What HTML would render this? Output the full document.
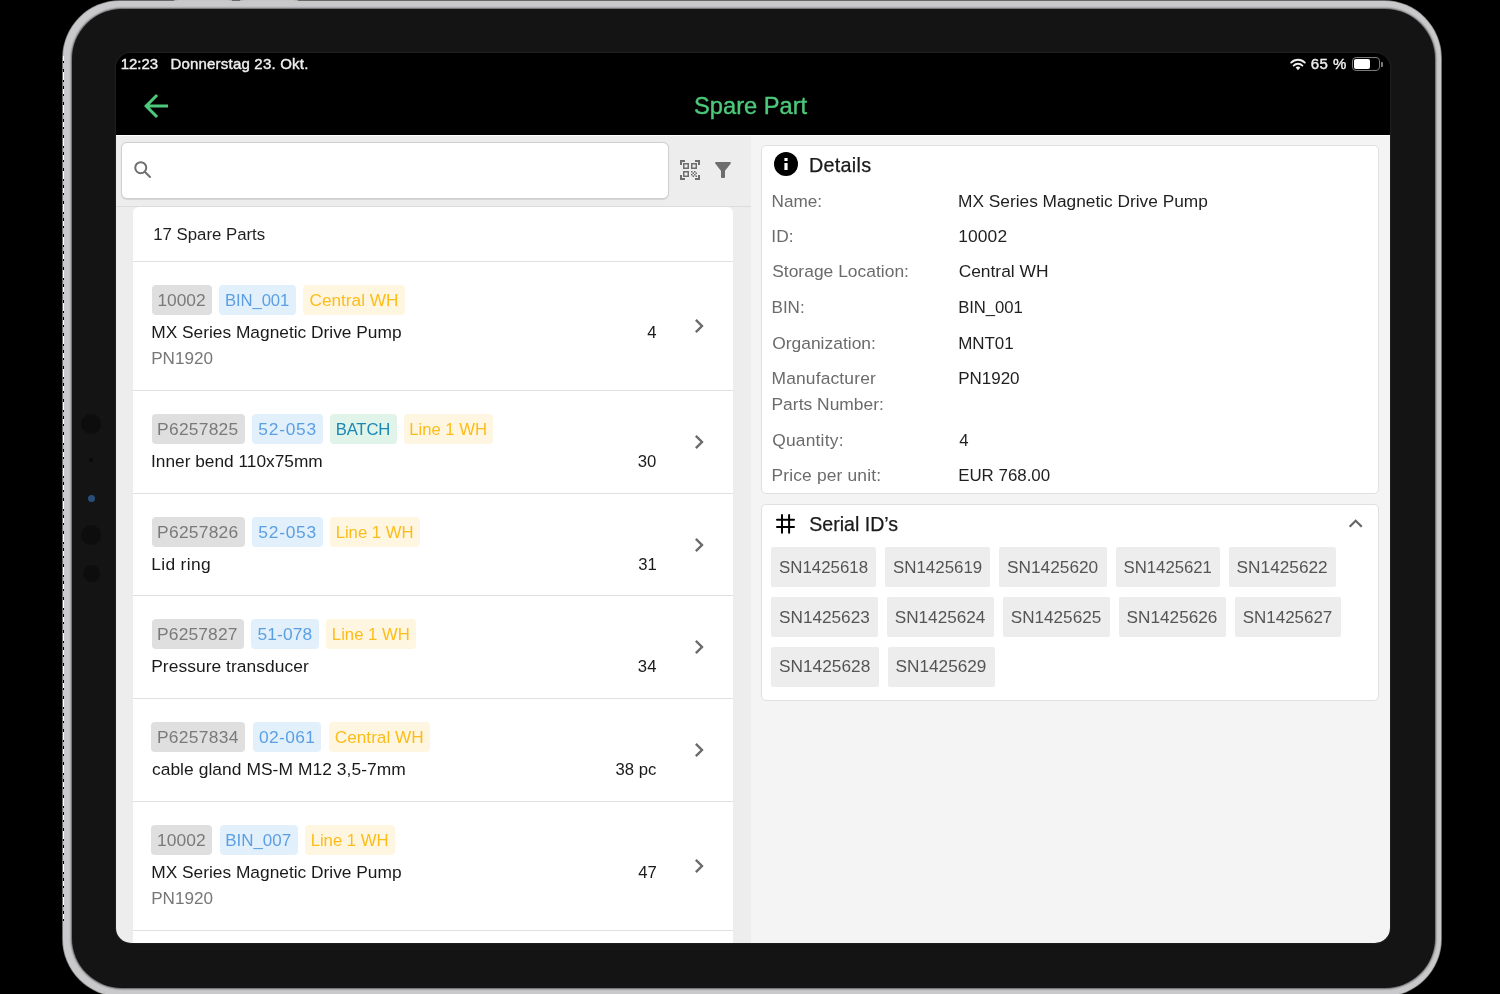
<!DOCTYPE html>
<html><head><meta charset="utf-8">
<style>
*{box-sizing:border-box;margin:0;padding:0}
html,body{width:1500px;height:994px;overflow:hidden;background:#000}
body{position:relative;font-family:"Liberation Sans",sans-serif}
.abs{position:absolute}
svg.abs{overflow:visible}
#dev{position:absolute;left:63px;top:1px;width:1378px;height:995px;border-radius:57px;background:#c9c9cc;box-shadow:0 0 0 0.8px rgba(255,255,250,.55)}
#bezel{position:absolute;left:72px;top:9px;width:1362.5px;height:979px;border-radius:50px;background:#141414;box-shadow:0 0 2px 1px #5a5a5a}
#screen{position:absolute;transform:translateZ(0);left:116px;top:53px;width:1274px;height:890px;border-radius:15px;overflow:hidden;background:#000;box-shadow:0 0 1.5px 1px #1f2222}
.t{position:absolute;white-space:nowrap;line-height:1}
</style></head><body>
<div class="abs" style="left:174px;top:-2px;width:58px;height:5px;border-radius:2.5px;background:linear-gradient(90deg,#6f6f6f 0,#9c9c9e 5px,#9c9c9e 53px,#6f6f6f 58px)"></div>
<div class="abs" style="left:240px;top:-2px;width:58px;height:5px;border-radius:2.5px;background:linear-gradient(90deg,#6f6f6f 0,#9c9c9e 5px,#9c9c9e 53px,#6f6f6f 58px)"></div>
<div id="dev"></div>
<div id="bezel"></div>
<div id="screen">
<div class="abs" style="left:0.00px;top:0.00px;width:1274.00px;height:82.00px;background:#000"></div>
<div class="abs" style="left:0.00px;top:82.00px;width:1274.00px;height:1.00px;background:#fff"></div>
<div class="abs" style="left:0.00px;top:83.00px;width:635.00px;height:807.00px;background:#ededed"></div>
<div class="abs" style="left:635.00px;top:83.00px;width:639.00px;height:807.00px;background:#f4f4f4"></div>
<svg class="abs" style="left:1174.00px;top:4.50px;" width="16" height="12.5" viewBox="0 0 16 12.5"><path d="M8 12.3 L5.6 9.6 A3.6 3.6 0 0 1 10.4 9.6 Z" fill="#efefef"/><path d="M3.6 7.6 A6.3 6.3 0 0 1 12.4 7.6" fill="none" stroke="#efefef" stroke-width="1.9" stroke-linecap="round"/><path d="M1.2 4.6 A9.6 9.6 0 0 1 14.8 4.6" fill="none" stroke="#efefef" stroke-width="1.9" stroke-linecap="round"/></svg>
<div class="abs" style="left:1236.20px;top:4.20px;width:28.00px;height:13.60px;border:1.2px solid #7a7a7a;border-radius:4px"></div>
<div class="abs" style="left:1238.20px;top:6.10px;width:15.60px;height:9.80px;background:#fff;border-radius:2px"></div>
<div class="abs" style="left:1264.80px;top:9.00px;width:1.80px;height:5.00px;background:#7a7a7a;border-radius:0 1px 1px 0"></div>
<svg class="abs" style="left:22.00px;top:34.70px;" width="36" height="36" viewBox="0 0 24 24"><path d="M20 11H7.83l5.59-5.59L12 4l-8 8 8 8 1.41-1.41L7.83 13H20v-2z" fill="#4cc97b"/></svg>
<div class="abs" style="left:5.00px;top:89.00px;width:548.00px;height:57.00px;background:#fff;border:1px solid #cfcfcf;border-radius:6px;box-shadow:0 0.6px 0.8px rgba(0,0,0,.10)"></div>
<svg class="abs" style="left:12.00px;top:102.00px;" width="30" height="30" viewBox="0 0 30 30"><circle cx="12.75" cy="12.7" r="5.5" fill="none" stroke="#6f6f6f" stroke-width="2"/><line x1="16.8" y1="16.8" x2="22" y2="22" stroke="#6f6f6f" stroke-width="2" stroke-linecap="round"/></svg>
<svg class="abs" style="left:562.00px;top:105.00px;" width="24" height="24" viewBox="0 0 24 24"><path fill="#6e6e6e" d="M9.5 6.5v3h-3v-3h3M11 5H5v6h6V5zm-1.5 9.5v3h-3v-3h3M11 13H5v6h6v-6zm6.5-6.5v3h-3v-3h3M19 5h-6v6h6V5zm-6 8h1.5v1.5H13V13zm1.5 1.5H16V16h-1.5v-1.5zM16 13h1.5v1.5H16V13zm-3 3h1.5v1.5H13V16zm1.5 1.5H16V19h-1.5v-1.5zM16 16h1.5v1.5H16V16zm1.5-1.5H19V16h-1.5v-1.5zm0 3H19V19h-1.5v-1.5zM22 7h-2V4h-3V2h5v5zm0 15v-5h-2v3h-3v2h5zM2 22h5v-2H4v-3H2v5zM2 2v5h2V4h3V2H2z"/></svg>
<svg class="abs" style="left:595.10px;top:104.90px;" width="24" height="24" viewBox="0 0 24 24"><path fill="#6e6e6e" d="M4.25 5.61C6.27 8.2 10 13 10 13v6c0 .55.45 1 1 1h2c.55 0 1-.45 1-1v-6s3.72-4.8 5.74-7.39c.51-.66.04-1.61-.79-1.61H5.04c-.83 0-1.3.95-.79 1.61z"/></svg>
<div class="abs" style="left:0.00px;top:153.00px;width:635.00px;height:1.00px;background:#dcdcdc"></div>
<div class="abs" style="left:17.00px;top:154.00px;width:600.00px;height:753.00px;background:#fff;border-radius:6px 6px 0 0"></div>
<div class="abs" style="left:17.00px;top:208.00px;width:600.00px;height:1.00px;background:#e0e0e0"></div>
<svg class="abs" style="left:569.35px;top:259.00px;" width="28" height="28" viewBox="0 0 24 24"><path fill="#6b6b6b" d="M10 6L8.59 7.41 13.17 12l-4.58 4.59L10 18l6-6z"/></svg>
<div class="abs" style="left:17.00px;top:337.00px;width:600.00px;height:1.00px;background:#e0e0e0"></div>
<svg class="abs" style="left:569.35px;top:375.00px;" width="28" height="28" viewBox="0 0 24 24"><path fill="#6b6b6b" d="M10 6L8.59 7.41 13.17 12l-4.58 4.59L10 18l6-6z"/></svg>
<div class="abs" style="left:17.00px;top:440.00px;width:600.00px;height:1.00px;background:#e0e0e0"></div>
<svg class="abs" style="left:569.35px;top:477.50px;" width="28" height="28" viewBox="0 0 24 24"><path fill="#6b6b6b" d="M10 6L8.59 7.41 13.17 12l-4.58 4.59L10 18l6-6z"/></svg>
<div class="abs" style="left:17.00px;top:542.00px;width:600.00px;height:1.00px;background:#e0e0e0"></div>
<svg class="abs" style="left:569.35px;top:580.00px;" width="28" height="28" viewBox="0 0 24 24"><path fill="#6b6b6b" d="M10 6L8.59 7.41 13.17 12l-4.58 4.59L10 18l6-6z"/></svg>
<div class="abs" style="left:17.00px;top:645.00px;width:600.00px;height:1.00px;background:#e0e0e0"></div>
<svg class="abs" style="left:569.35px;top:683.00px;" width="28" height="28" viewBox="0 0 24 24"><path fill="#6b6b6b" d="M10 6L8.59 7.41 13.17 12l-4.58 4.59L10 18l6-6z"/></svg>
<div class="abs" style="left:17.00px;top:748.00px;width:600.00px;height:1.00px;background:#e0e0e0"></div>
<svg class="abs" style="left:569.35px;top:799.00px;" width="28" height="28" viewBox="0 0 24 24"><path fill="#6b6b6b" d="M10 6L8.59 7.41 13.17 12l-4.58 4.59L10 18l6-6z"/></svg>
<div class="abs" style="left:17.00px;top:877.00px;width:600.00px;height:1.00px;background:#e0e0e0"></div>
<div class="abs" style="left:35.60px;top:232.00px;width:60.60px;height:30.00px;background:#dfdfdf;border-radius:4px"></div>
<div class="abs" style="left:103.30px;top:232.00px;width:76.60px;height:30.00px;background:#e2f0fc;border-radius:4px"></div>
<div class="abs" style="left:187.30px;top:232.00px;width:101.40px;height:30.00px;background:#fff6e1;border-radius:4px"></div>
<div class="abs" style="left:35.50px;top:361.00px;width:93.40px;height:30.00px;background:#dfdfdf;border-radius:4px"></div>
<div class="abs" style="left:136.00px;top:361.00px;width:70.90px;height:30.00px;background:#e2f0fc;border-radius:4px"></div>
<div class="abs" style="left:214.00px;top:361.00px;width:66.50px;height:30.00px;background:#e1f4e9;border-radius:4px"></div>
<div class="abs" style="left:287.50px;top:361.00px;width:89.70px;height:30.00px;background:#fff6e1;border-radius:4px"></div>
<div class="abs" style="left:35.50px;top:464.00px;width:93.40px;height:30.00px;background:#dfdfdf;border-radius:4px"></div>
<div class="abs" style="left:136.00px;top:464.00px;width:70.90px;height:30.00px;background:#e2f0fc;border-radius:4px"></div>
<div class="abs" style="left:214.00px;top:464.00px;width:89.60px;height:30.00px;background:#fff6e1;border-radius:4px"></div>
<div class="abs" style="left:35.50px;top:566.00px;width:92.40px;height:30.00px;background:#dfdfdf;border-radius:4px"></div>
<div class="abs" style="left:135.10px;top:566.00px;width:67.90px;height:30.00px;background:#e2f0fc;border-radius:4px"></div>
<div class="abs" style="left:210.20px;top:566.00px;width:89.80px;height:30.00px;background:#fff6e1;border-radius:4px"></div>
<div class="abs" style="left:35.30px;top:669.00px;width:93.90px;height:30.00px;background:#dfdfdf;border-radius:4px"></div>
<div class="abs" style="left:136.50px;top:669.00px;width:68.90px;height:30.00px;background:#e2f0fc;border-radius:4px"></div>
<div class="abs" style="left:212.70px;top:669.00px;width:101.10px;height:30.00px;background:#fff6e1;border-radius:4px"></div>
<div class="abs" style="left:35.30px;top:772.00px;width:60.90px;height:30.00px;background:#dfdfdf;border-radius:4px"></div>
<div class="abs" style="left:103.50px;top:772.00px;width:78.20px;height:30.00px;background:#e2f0fc;border-radius:4px"></div>
<div class="abs" style="left:189.00px;top:772.00px;width:89.60px;height:30.00px;background:#fff6e1;border-radius:4px"></div>
<div class="abs" style="left:645.20px;top:91.50px;width:617.80px;height:349.50px;background:#fff;border:1px solid #e0e0e0;border-radius:5px"></div>
<svg class="abs" style="left:658.00px;top:99.30px;" width="24" height="24" viewBox="0 0 24 24"><circle cx="12" cy="12" r="12" fill="#000"/><rect x="10.4" y="6" width="3.2" height="3" fill="#fff"/><rect x="10.4" y="11" width="3.2" height="7" fill="#fff"/></svg>
<div class="abs" style="left:645.20px;top:450.50px;width:617.80px;height:197.00px;background:#fff;border:1px solid #e0e0e0;border-radius:5px"></div>
<svg class="abs" style="left:652.00px;top:455.00px;" width="34" height="32" viewBox="0 0 34 32"><g stroke="#000" stroke-width="2" stroke-linecap="round" fill="none"><line x1="9" y1="11.8" x2="26" y2="11.8"/><line x1="9" y1="18.9" x2="26" y2="18.9"/><line x1="14" y1="7" x2="14" y2="24.8"/><line x1="21.1" y1="7" x2="21.1" y2="24.8"/></g></svg>
<svg class="abs" style="left:1225.50px;top:456.64px;" width="27.4" height="27.4" viewBox="0 0 24 24"><path fill="#666" d="M12 8l-6 6 1.41 1.41L12 10.83l4.59 4.58L18 14z"/></svg>
<div class="abs" style="left:655.20px;top:494.00px;width:105.30px;height:40.30px;background:#ededed;border-radius:2px"></div>
<div class="abs" style="left:769.20px;top:494.00px;width:105.30px;height:40.30px;background:#ededed;border-radius:2px"></div>
<div class="abs" style="left:883.20px;top:494.00px;width:107.40px;height:40.30px;background:#ededed;border-radius:2px"></div>
<div class="abs" style="left:999.70px;top:494.00px;width:104.50px;height:40.30px;background:#ededed;border-radius:2px"></div>
<div class="abs" style="left:1112.80px;top:494.00px;width:107.10px;height:40.30px;background:#ededed;border-radius:2px"></div>
<div class="abs" style="left:655.20px;top:544.00px;width:107.10px;height:40.30px;background:#ededed;border-radius:2px"></div>
<div class="abs" style="left:770.90px;top:544.00px;width:107.10px;height:40.30px;background:#ededed;border-radius:2px"></div>
<div class="abs" style="left:887.00px;top:544.00px;width:106.70px;height:40.30px;background:#ededed;border-radius:2px"></div>
<div class="abs" style="left:1002.80px;top:544.00px;width:107.00px;height:40.30px;background:#ededed;border-radius:2px"></div>
<div class="abs" style="left:1118.90px;top:544.00px;width:105.70px;height:40.30px;background:#ededed;border-radius:2px"></div>
<div class="abs" style="left:655.20px;top:593.50px;width:107.50px;height:40.30px;background:#ededed;border-radius:2px"></div>
<div class="abs" style="left:771.80px;top:593.50px;width:107.00px;height:40.30px;background:#ededed;border-radius:2px"></div>
<div class="t" style="left:4.65px;top:3px;font-size:14.98px;color:#efefef;-webkit-text-stroke:0.4px #efefef">12:23</div>
<div class="t" style="left:54.40px;top:3px;font-size:15px;color:#efefef;letter-spacing:0.204px;-webkit-text-stroke:0.4px #efefef">Donnerstag 23. Okt.</div>
<div class="t" style="left:1194.75px;top:3px;font-size:15px;color:#efefef;letter-spacing:0.499px;-webkit-text-stroke:0.4px #efefef">65 %</div>
<div class="t" style="left:578.05px;top:42px;font-size:23.66px;color:#4cc97b;-webkit-text-stroke:0.4px #4cc97b">Spare Part</div>
<div class="t" style="left:37.22px;top:174px;font-size:16.8px;color:#1f1f1f;">17 Spare Parts</div>
<div class="t" style="left:41.38px;top:239px;font-size:17.38px;color:#7a7a7a;">10002</div>
<div class="t" style="left:108.96px;top:240px;font-size:16.7px;color:#5b9fe2;letter-spacing:-0.097px;">BIN_001</div>
<div class="t" style="left:193.44px;top:239px;font-size:17.26px;color:#fcbd1a;">Central WH</div>
<div class="t" style="left:35.21px;top:271px;font-size:17.33px;color:#1a1a1a;">MX Series Magnetic Drive Pump</div>
<div class="t" style="left:35.13px;top:297px;font-size:17.13px;color:#777777;">PN1920</div>
<div class="t" style="left:531.15px;top:272px;font-size:16.7px;color:#1a1a1a;">4</div>
<div class="t" style="left:41.11px;top:368px;font-size:17.4px;color:#7a7a7a;letter-spacing:0.254px;">P6257825</div>
<div class="t" style="left:142.30px;top:368px;font-size:17.4px;color:#5b9fe2;letter-spacing:0.749px;">52-053</div>
<div class="t" style="left:219.66px;top:369px;font-size:16.7px;color:#1a87b5;letter-spacing:-0.155px;">BATCH</div>
<div class="t" style="left:293.16px;top:369px;font-size:16.7px;color:#fcbd1a;">Line 1 WH</div>
<div class="t" style="left:35.04px;top:400px;font-size:17.3px;color:#1a1a1a;">Inner bend 110x75mm</div>
<div class="t" style="left:521.63px;top:401px;font-size:16.7px;color:#1a1a1a;">30</div>
<div class="t" style="left:41.11px;top:471px;font-size:17.4px;color:#7a7a7a;letter-spacing:0.254px;">P6257826</div>
<div class="t" style="left:142.30px;top:471px;font-size:17.4px;color:#5b9fe2;letter-spacing:0.749px;">52-053</div>
<div class="t" style="left:219.66px;top:472px;font-size:16.7px;color:#fcbd1a;letter-spacing:-0.015px;">Line 1 WH</div>
<div class="t" style="left:35.21px;top:503px;font-size:17.4px;color:#1a1a1a;letter-spacing:0.343px;">Lid ring</div>
<div class="t" style="left:522.20px;top:504px;font-size:16.7px;color:#1a1a1a;">31</div>
<div class="t" style="left:41.11px;top:573px;font-size:17.4px;color:#7a7a7a;letter-spacing:0.136px;">P6257827</div>
<div class="t" style="left:141.40px;top:573px;font-size:17.4px;color:#5b9fe2;letter-spacing:0.149px;">51-078</div>
<div class="t" style="left:215.86px;top:574px;font-size:16.72px;color:#fcbd1a;">Line 1 WH</div>
<div class="t" style="left:35.21px;top:605px;font-size:17.4px;color:#1a1a1a;letter-spacing:0.053px;">Pressure transducer</div>
<div class="t" style="left:521.86px;top:606px;font-size:16.7px;color:#1a1a1a;">34</div>
<div class="t" style="left:40.91px;top:676px;font-size:17.4px;color:#7a7a7a;letter-spacing:0.3px;">P6257834</div>
<div class="t" style="left:142.98px;top:676px;font-size:17.4px;color:#5b9fe2;letter-spacing:0.349px;">02-061</div>
<div class="t" style="left:218.84px;top:676px;font-size:17.2px;color:#fcbd1a;">Central WH</div>
<div class="t" style="left:35.90px;top:708px;font-size:17.4px;color:#1a1a1a;letter-spacing:0.059px;">cable gland MS-M M12 3,5-7mm</div>
<div class="t" style="left:499.48px;top:709px;font-size:16.7px;color:#1a1a1a;">38 pc</div>
<div class="t" style="left:41.08px;top:779px;font-size:17.4px;color:#7a7a7a;letter-spacing:0.059px;">10002</div>
<div class="t" style="left:109.14px;top:780px;font-size:16.97px;color:#5b9fe2;">BIN_007</div>
<div class="t" style="left:194.66px;top:780px;font-size:16.7px;color:#fcbd1a;letter-spacing:-0.015px;">Line 1 WH</div>
<div class="t" style="left:35.21px;top:811px;font-size:17.33px;color:#1a1a1a;">MX Series Magnetic Drive Pump</div>
<div class="t" style="left:35.13px;top:837px;font-size:17.13px;color:#777777;">PN1920</div>
<div class="t" style="left:522.20px;top:812px;font-size:16.7px;color:#1a1a1a;">47</div>
<div class="t" style="left:692.92px;top:103px;font-size:19.8px;color:#1a1a1a;letter-spacing:0.276px;-webkit-text-stroke:0.25px #1a1a1a">Details</div>
<div class="t" style="left:655.53px;top:140px;font-size:17.14px;color:#6b6b6b;">Name:</div>
<div class="t" style="left:842.12px;top:140px;font-size:17.29px;color:#1f1f1f;">MX Series Magnetic Drive Pump</div>
<div class="t" style="left:655.34px;top:175px;font-size:17.36px;color:#6b6b6b;">ID:</div>
<div class="t" style="left:842.28px;top:175px;font-size:17.4px;color:#1f1f1f;letter-spacing:0.109px;">10002</div>
<div class="t" style="left:656.20px;top:210px;font-size:17.4px;color:#6b6b6b;letter-spacing:0.027px;">Storage Location:</div>
<div class="t" style="left:842.63px;top:210px;font-size:17.4px;color:#1f1f1f;">Central WH</div>
<div class="t" style="left:655.54px;top:246px;font-size:17.05px;color:#6b6b6b;">BIN:</div>
<div class="t" style="left:842.16px;top:247px;font-size:16.7px;color:#1f1f1f;letter-spacing:-0.047px;">BIN_001</div>
<div class="t" style="left:656.20px;top:282px;font-size:17.4px;color:#6b6b6b;letter-spacing:0.019px;">Organization:</div>
<div class="t" style="left:842.14px;top:283px;font-size:16.97px;color:#1f1f1f;">MNT01</div>
<div class="t" style="left:655.51px;top:317px;font-size:17.4px;color:#6b6b6b;letter-spacing:0.164px;">Manufacturer</div>
<div class="t" style="left:842.14px;top:317px;font-size:17.01px;color:#1f1f1f;">PN1920</div>
<div class="t" style="left:655.51px;top:343px;font-size:17.4px;color:#6b6b6b;letter-spacing:0.021px;">Parts Number:</div>
<div class="t" style="left:656.20px;top:379px;font-size:17.4px;color:#6b6b6b;letter-spacing:0.211px;">Quantity:</div>
<div class="t" style="left:843.17px;top:380px;font-size:16.7px;color:#1f1f1f;">4</div>
<div class="t" style="left:655.51px;top:414px;font-size:17.4px;color:#6b6b6b;letter-spacing:0.162px;">Price per unit:</div>
<div class="t" style="left:842.15px;top:415px;font-size:16.9px;color:#1f1f1f;">EUR 768.00</div>
<div class="t" style="left:693.22px;top:462px;font-size:19.58px;color:#1a1a1a;-webkit-text-stroke:0.25px #1a1a1a">Serial ID’s</div>
<div class="t" style="left:663.03px;top:507px;font-size:16.86px;color:#555555;">SN1425618</div>
<div class="t" style="left:777.02px;top:507px;font-size:16.9px;color:#555555;">SN1425619</div>
<div class="t" style="left:891.01px;top:506px;font-size:17.27px;color:#555555;">SN1425620</div>
<div class="t" style="left:1007.53px;top:507px;font-size:16.74px;color:#555555;">SN1425621</div>
<div class="t" style="left:1120.61px;top:506px;font-size:17.24px;color:#555555;">SN1425622</div>
<div class="t" style="left:663.01px;top:556px;font-size:17.21px;color:#555555;">SN1425623</div>
<div class="t" style="left:778.71px;top:556px;font-size:17.18px;color:#555555;">SN1425624</div>
<div class="t" style="left:894.81px;top:556px;font-size:17.13px;color:#555555;">SN1425625</div>
<div class="t" style="left:1010.61px;top:556px;font-size:17.19px;color:#555555;">SN1425626</div>
<div class="t" style="left:1126.72px;top:557px;font-size:16.97px;color:#555555;">SN1425627</div>
<div class="t" style="left:663.01px;top:605px;font-size:17.29px;color:#555555;">SN1425628</div>
<div class="t" style="left:779.61px;top:605px;font-size:17.22px;color:#555555;">SN1425629</div>
</div>
<div class="abs" style="left:81px;top:413.5px;width:20px;height:20px;border-radius:50%;background:#0d0d0d"></div>
<div class="abs" style="left:89px;top:458px;width:4px;height:4px;border-radius:50%;background:#0a0a0a"></div>
<div class="abs" style="left:87.5px;top:494.5px;width:7.0px;height:7.0px;border-radius:50%;background:#2a4e7a"></div>
<div class="abs" style="left:81px;top:525px;width:20px;height:20px;border-radius:50%;background:#0d0d0d"></div>
<div class="abs" style="left:82.5px;top:564.5px;width:17.0px;height:17.0px;border-radius:50%;background:#0d0d0d"></div>
<div class="abs" style="left:63px;top:56px;width:1px;height:866px;background:repeating-linear-gradient(180deg,#fff 0 5px,#000 5px 7px,#f0e000 7px 13px,#000 13px 16px,#fff 16px 24px,#000 24px 26px,#e8d800 26px 30px,#000 30px 33px)"></div>
</body></html>
